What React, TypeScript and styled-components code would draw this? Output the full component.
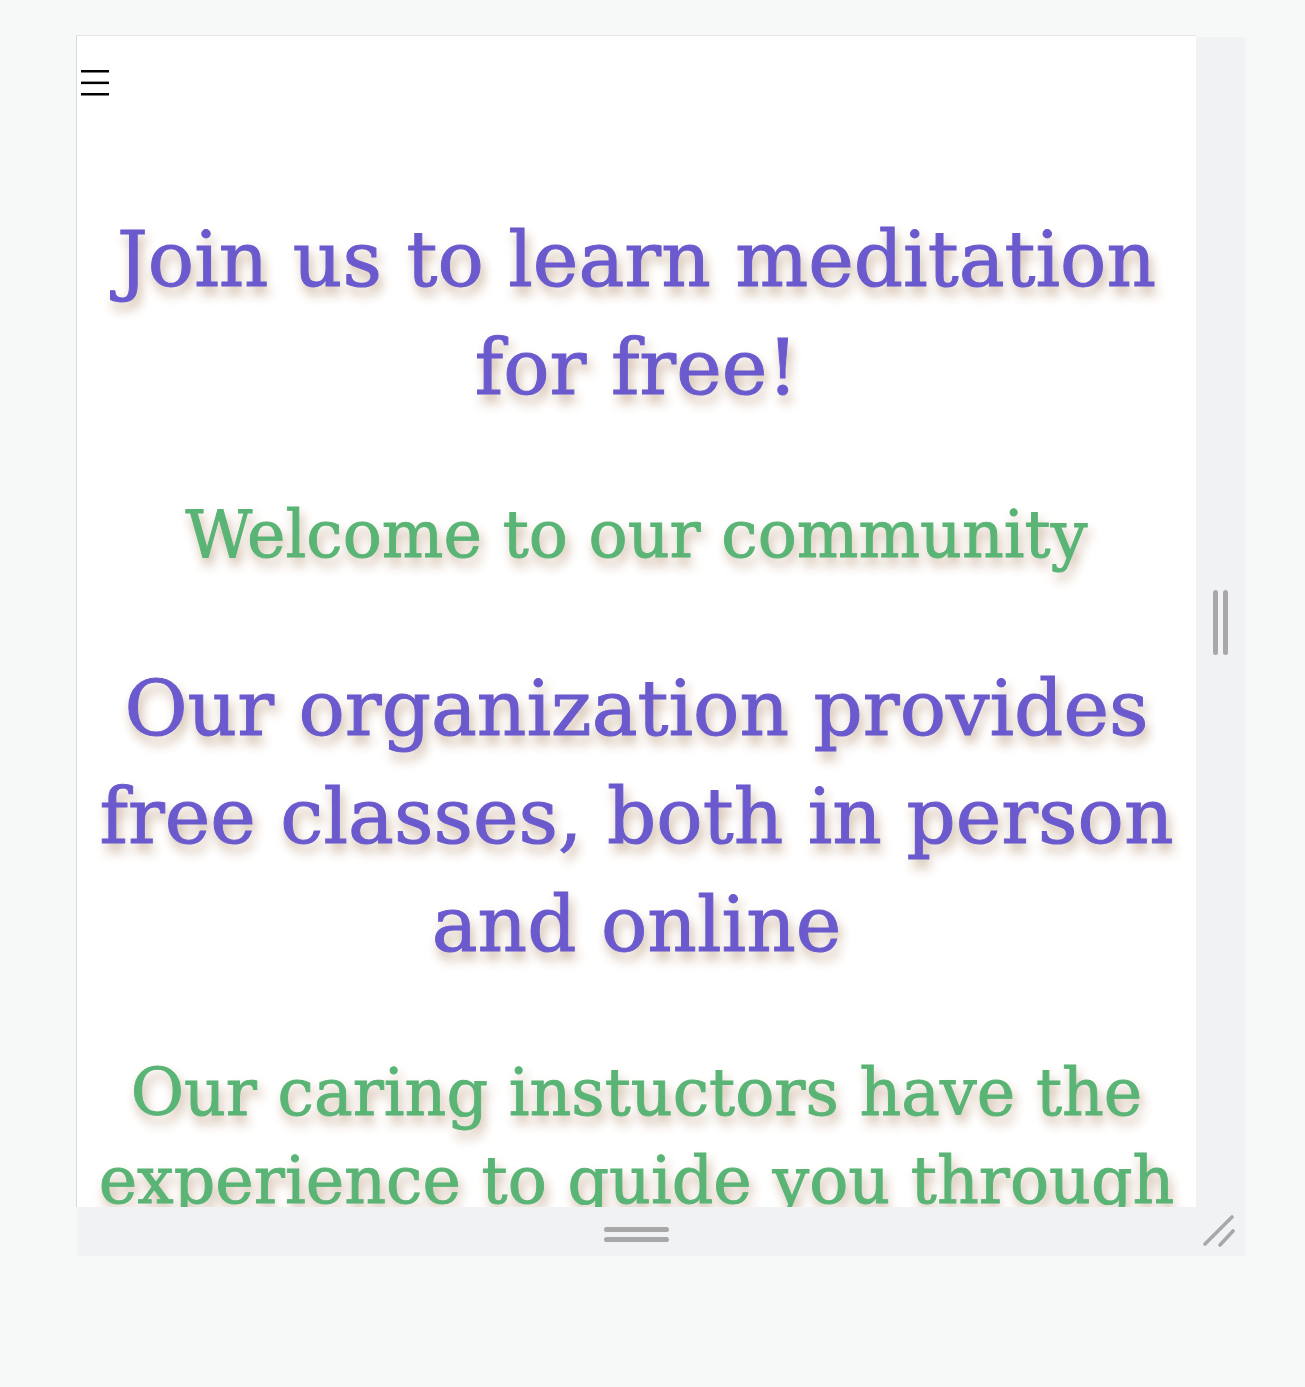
import React from "react";
import styled, { createGlobalStyle } from "styled-components";

const Global = createGlobalStyle`
  html, body { margin: 0; padding: 0; }
  body { background: #f7f8f8; font-family: "DejaVu Serif", serif; }
`;

const Page = styled.div`
  padding: 35px 0 0 76px;
  min-height: 1387px;
  box-sizing: border-box;
`;

const Preview = styled.div`
  display: grid;
  grid-template-columns: 1120px 49px;
  grid-template-rows: 1172px 49px;
`;

const Frame = styled.div`
  background: #fff;
  border-left: 1px solid #d9d9d9;
  border-top: 1px solid #e6e6e6;
  box-sizing: border-box;
  overflow: hidden;
`;

const SideHandle = styled.div`
  margin-top: 2px;
  background: #f1f2f4;
  display: flex;
  align-items: center;
  justify-content: center;
  gap: 5px;
`;

const VBar = styled.span`
  width: 5px;
  height: 65px;
  border-radius: 3px;
  background: #a8a8a8;
`;

const BottomHandle = styled.div`
  grid-column: 1 / 3;
  margin-left: 1px;
  background: #f1f2f4;
  position: relative;
  display: grid;
  grid-template-columns: 1119px 49px;
`;

const BarStack = styled.div`
  display: flex;
  flex-direction: column;
  align-items: center;
  justify-content: center;
  gap: 5px;
  padding-top: 6px;
`;

const HBar = styled.span`
  width: 65px;
  height: 5px;
  border-radius: 3px;
  background: #a8a8a8;
`;

const Corner = styled.svg`
  position: absolute;
  right: 8px;
  bottom: 9px;
`;

const Menu = styled.svg`
  display: block;
  margin: 34px 0 0 4px;
`;

const Content = styled.div`
  padding: 0 10px;
  text-align: center;
`;

const Big = styled.h1<{ $top: number }>`
  margin: ${(p) => p.$top}px 0 0;
  font-family: "DejaVu Serif", serif;
  font-weight: 400;
  font-size: 77px;
  line-height: 108px;
  color: #6a5acd;
  -webkit-text-stroke: 1px #6a5acd;
  text-shadow: 3px 8px 12px #c8ad95;
`;

const Sub = styled.h2<{ $top: number }>`
  margin: ${(p) => p.$top}px 0 0;
  font-family: "DejaVu Serif", serif;
  font-weight: 400;
  font-size: 65px;
  line-height: 88px;
  color: #59b475;
  -webkit-text-stroke: 0.9px #59b475;
  text-shadow: 3px 8px 12px #c8ad95;
`;

export default function App() {
  return (
    <>
      <Global />
      <Page>
        <Preview>
          <Frame>
            <Menu width="28" height="26" viewBox="0 0 28 26">
              <rect x="0" y="0" width="28" height="2.5" fill="#000" />
              <rect x="0" y="11.6" width="28" height="2.5" fill="#000" />
              <rect x="0" y="23" width="28" height="2.5" fill="#000" />
            </Menu>
            <Content>
              <Big $top={110}>Join us to learn meditation for free!</Big>
              <Sub $top={69}>Welcome to our community</Sub>
              <Big $top={76}>Our organization provides free classes, both in person and online</Big>
              <Sub $top={70}>Our caring instuctors have the experience to guide you through</Sub>
            </Content>
          </Frame>
          <SideHandle>
            <VBar />
            <VBar />
          </SideHandle>
          <BottomHandle>
            <BarStack>
              <HBar />
              <HBar />
            </BarStack>
            <Corner width="34" height="32" viewBox="0 0 34 32">
              <line x1="2" y1="29" x2="29" y2="2" stroke="#a8a8a8" strokeWidth="3.6" strokeLinecap="round" />
              <line x1="17" y1="30" x2="30" y2="16" stroke="#a8a8a8" strokeWidth="3.6" strokeLinecap="round" />
            </Corner>
          </BottomHandle>
        </Preview>
      </Page>
    </>
  );
}
